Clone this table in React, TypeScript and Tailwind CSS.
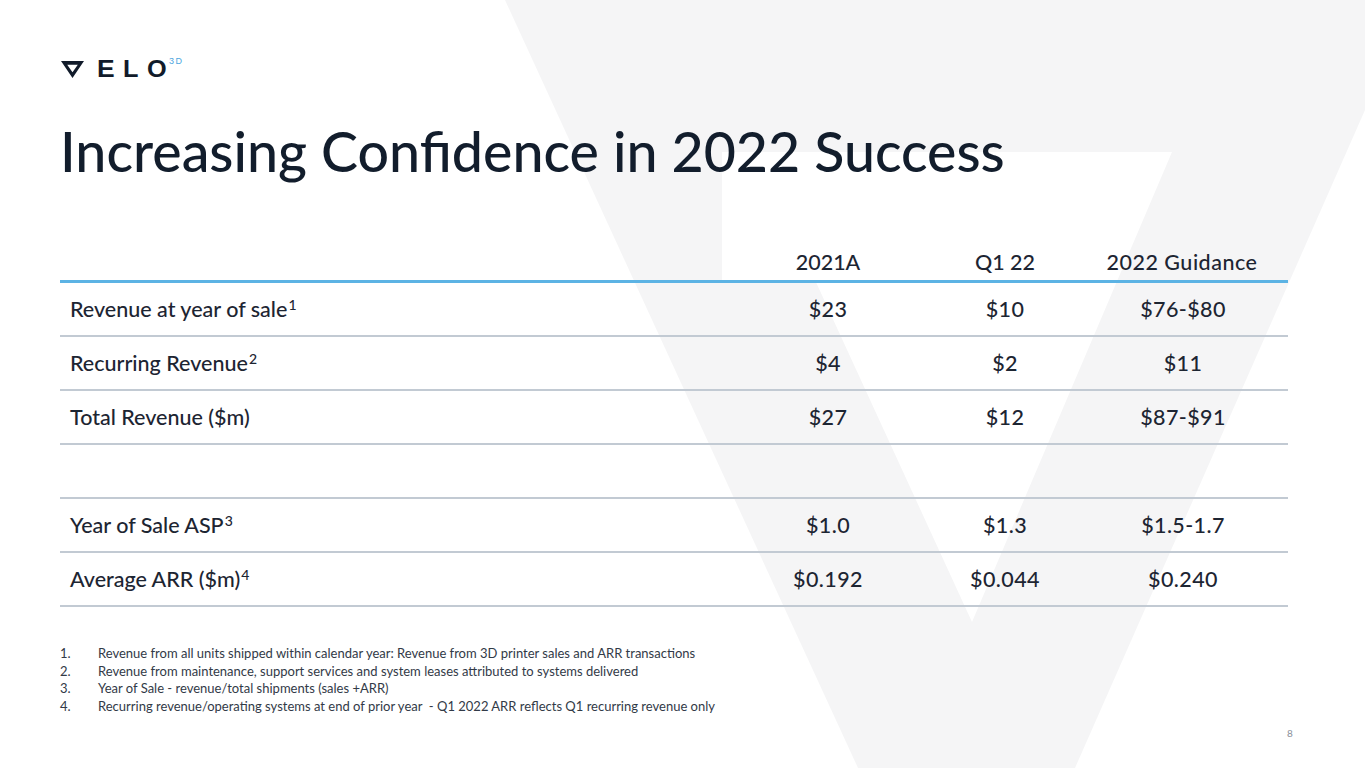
import React from "react";

const rows: { label: string; sup?: string; a: string; b: string; c: string }[] = [
  { label: "Revenue at year of sale", sup: "1", a: "$23", b: "$10", c: "$76-$80" },
  { label: "Recurring Revenue", sup: "2", a: "$4", b: "$2", c: "$11" },
  { label: "Total Revenue ($m)", a: "$27", b: "$12", c: "$87-$91" },
  { label: "", a: "", b: "", c: "" },
  { label: "Year of Sale ASP", sup: "3", a: "$1.0", b: "$1.3", c: "$1.5-1.7" },
  { label: "Average ARR ($m)", sup: "4", a: "$0.192", b: "$0.044", c: "$0.240" },
];

const notes = [
  "Revenue from all units shipped within calendar year: Revenue from 3D printer sales and ARR transactions",
  "Revenue from maintenance, support services and system leases attributed to systems delivered",
  "Year of Sale - revenue/total shipments (sales +ARR)",
  "Recurring revenue/operating systems at end of prior year  - Q1 2022 ARR reflects Q1 recurring revenue only",
];

function Background() {
  return (
    <svg
      className="absolute inset-0 z-0"
      width="1365"
      height="768"
      viewBox="0 0 1365 768"
    >
      <polygon points="505,0 1365,0 1365,110 1075,768 858,768" fill="#f5f5f6" />
      <polygon points="722,152 1172,152 972,622 815,280 722,280" fill="#ffffff" />
    </svg>
  );
}

function Logo() {
  return (
    <div className="flex items-start h-[22px]">
      <svg width="23" height="17" viewBox="0 0 23 17" className="mt-[4px] ml-[1px]">
        <path
          d="M0 0 H23 L11.5 17 Z M6.2 3.8 L11.5 11.2 L16.8 3.8 Z"
          fill="#111b2a"
          fillRule="evenodd"
        />
      </svg>
      <div
        className="flex items-start ml-[13px] text-[#111b2a] font-black text-[23px] leading-[23px] mt-[1px]"
        style={{ fontFamily: '"Liberation Sans", Arial, sans-serif' }}
      >
        <span className="w-[26px]"><span className="inline-block origin-left scale-x-[1.15]">E</span></span>
        <span className="w-[24px]"><span className="inline-block origin-left scale-x-[1.1]">L</span></span>
        <span className="w-[22px]"><span className="inline-block origin-left scale-x-[1.1]">O</span></span>
        <span className="text-[9px] leading-[9px] text-[#4da6de] tracking-[1.5px] -mt-[1px] font-normal">3D</span>
      </div>
    </div>
  );
}

export default function App() {
  return (
    <div
      className="relative w-[1365px] h-[768px] overflow-hidden bg-white"
      style={{ fontFamily: 'Lato, "Open Sans", sans-serif' }}
    >
      <Background />
      <div className="relative z-10 flex flex-col pl-[60px] pt-[57px]">
        <Logo />
        <h1 className="mt-[40px] text-[55.5px] leading-[64px] text-[#121d2c] font-medium tracking-[0px]">
          Increasing Confidence in 2022 Success
        </h1>

        <div className="mt-[57px] w-[1228px] text-[#1d2532] font-medium">
          <div className="grid grid-cols-[680px_176px_178px_194px] h-[43px] items-center pt-[4px] border-b-[3px] border-[#5cb3e4] text-[21.5px]">
            <div />
            <div className="text-center">2021A</div>
            <div className="text-center">Q1 22</div>
            <div className="text-center pr-[18px] tracking-[0.5px]">2022 Guidance</div>
          </div>
          {rows.map((r, i) => (
            <div
              key={i}
              className="grid grid-cols-[680px_176px_178px_194px] h-[54px] items-center border-b-[2px] border-[#c2cad3] text-[21.5px]"
            >
              <div className="pl-[10px]">
                {r.label}
                {r.sup && (
                  <sup className="text-[14px] ml-[1px]">{r.sup}</sup>
                )}
              </div>
              <div className="text-center tracking-[0.4px]">{r.a}</div>
              <div className="text-center tracking-[0.4px]">{r.b}</div>
              <div className="text-center pr-[16px] tracking-[0.4px]">{r.c}</div>
            </div>
          ))}
        </div>

        <div className="mt-[38px] flex flex-col text-[13px] leading-[17.5px] text-[#323a47]">
          {notes.map((n, i) => (
            <div key={i} className="flex">
              <span className="w-[38px]">{i + 1}.</span>
              <span className="whitespace-pre">{n}</span>
            </div>
          ))}
        </div>
      </div>
      <div className="absolute left-[1287px] top-[726px] z-10 text-[10px] text-[#8a909a]">8</div>
    </div>
  );
}
